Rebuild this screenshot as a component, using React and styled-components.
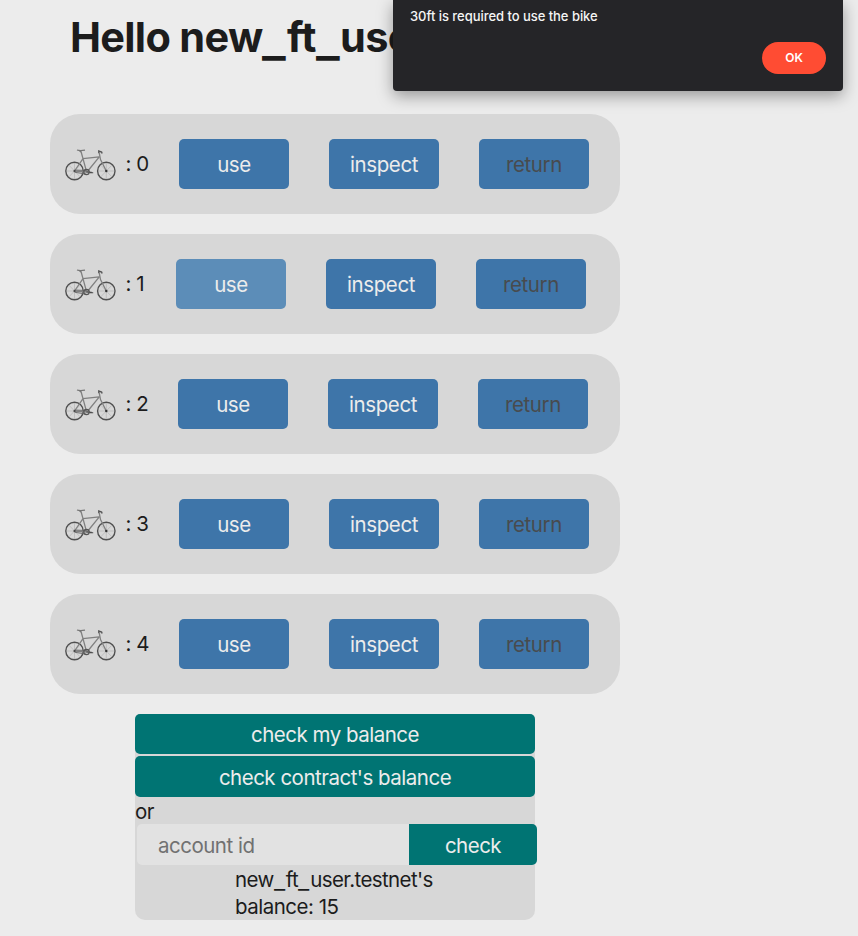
import React from "react";
import styled, { createGlobalStyle } from "styled-components";

const GlobalStyle = createGlobalStyle`
  * { box-sizing: border-box; }
  body {
    margin: 0;
    background: #ececec;
    color: #1c1c1c;
    font-family: Inter, "Liberation Sans", sans-serif;
    font-size: 20.5px;
    letter-spacing: -0.5px;
    font-feature-settings: "calt" 0;
    overflow: hidden;
  }
`;

const Page = styled.main`
  width: 858px;
  height: 936px;
  padding-left: 50px;
  overflow: hidden;
`;

const Title = styled.h1`
  margin: 0;
  height: 114px;
  padding: 11px 0 0 20px;
  font-size: 41.5px;
  line-height: 52px;
  font-weight: 700;
  letter-spacing: -0.7px;
  white-space: nowrap;
`;

const Underscore = styled.span`
  display: inline-block;
  width: 0.59em;
  letter-spacing: 0;
  transform: translateY(0.09em) scaleX(1.2);
  transform-origin: left;
`;

const BikeList = styled.div`
  display: flex;
  flex-direction: column;
  gap: 20px;
  width: 570px;
`;

const BikeRow = styled.section`
  display: flex;
  align-items: center;
  height: 100px;
  padding-left: 15px;
  border-radius: 30px;
  background: #d7d7d7;
`;

const BikeDrawing = styled.svg`
  flex: none;
  width: 52px;
  height: 34px;
  margin: 1px 8.5px 0 0;
`;

const BikeLabel = styled.span`
  flex: none;
  width: ${(p) => p.$width}px;
  line-height: 28px;
  white-space: nowrap;
`;

const Actions = styled.div`
  display: flex;
  gap: 40px;
`;

const Button = styled.button`
  border: none;
  padding: 0;
  color: #ececec;
  font: inherit;
  font-feature-settings: inherit;
  letter-spacing: inherit;
`;

const ActionButton = styled(Button)`
  width: 110px;
  height: 50px;
  padding-top: 1px;
  border-radius: 5px;
  background: ${(p) => (p.$active ? "#5c8db8" : "#3e75a9")};
  letter-spacing: -0.4px;
  &:disabled { color: #484b4e; }
`;

const BalancePanel = styled.section`
  display: flex;
  flex-direction: column;
  width: 400px;
  height: 206px;
  margin: 20px 0 0 85px;
  border-radius: 5px 5px 10px 10px;
  background: #d7d7d7;
`;

const BalanceButton = styled(Button)`
  flex: none;
  height: ${(p) => p.$height}px;
  margin-bottom: ${(p) => p.$gap}px;
  padding-top: ${(p) => p.$height - 39}px;
  border-radius: 5px;
  background: #007473;
`;

const OrText = styled.div`
  flex: none;
  height: 27px;
  line-height: 30px;
`;

const AccountForm = styled.div`
  display: flex;
  flex: none;
  width: 400px;
  height: 41px;
  margin-left: 2px;
`;

const AccountInput = styled.input`
  width: 272px;
  border: none;
  border-radius: 5px 0 0 5px;
  padding: 2px 0 0 21px;
  background: #e2e2e2;
  font: inherit;
  letter-spacing: inherit;
  &::placeholder { color: #717171; opacity: 1; }
`;

const CheckButton = styled(Button)`
  width: 128px;
  padding-top: 2px;
  border-radius: 0 5px 5px 0;
  background: #007473;
`;

const BalanceResult = styled.p`
  flex: none;
  width: 202px;
  margin: 1px 0 0 100px;
  line-height: 27px;
`;

const AccountName = styled.span`
  letter-spacing: -0.6px;
`;

const Dialog = styled.div`
  position: absolute;
  top: 0;
  left: 393px;
  display: flex;
  flex-direction: column;
  width: 450px;
  height: 91px;
  padding: 7px 17px 0;
  border-radius: 0 0 4px 4px;
  background: #252528;
  box-shadow: 0 5px 16px rgba(0, 0, 0, 0.36);
  color: #f5f5f5;
  font-size: 13px;
  font-weight: 500;
  letter-spacing: -0.04px;
`;

const DialogMessage = styled.div`
  height: 35px;
  line-height: 19px;
`;

const OkButton = styled(Button)`
  align-self: flex-end;
  width: 64px;
  height: 32px;
  padding-bottom: 1px;
  border-radius: 16px;
  background: #ff4c33;
  color: #fff;
  font-size: 12px;
  font-weight: 600;
`;

function Bike() {
  return (
    <BikeDrawing viewBox="0 0 52 34" fill="none" aria-label="bike">
      <g stroke="#505050" strokeWidth="1.4">
        <circle cx="9.5" cy="23" r="8.7" />
        <circle cx="41.3" cy="23" r="8.7" />
      </g>
      <g stroke="#a2a2a2" strokeWidth=".45">
        <path d="M9.5 15v16M1.5 23h16M4 17.2l11 11.6M15 17.2 4 28.8" />
        <path d="M41.3 15v16M33.3 23h16M35.8 17.2l11 11.6M46.8 17.2l-11 11.6" />
      </g>
      <g stroke="#808080" strokeWidth="1.3" strokeLinejoin="round">
        <path d="m9.5 23 8.5-12.3L34.3 8.8 22 24zM16 3.5 18 10.7l3.5 13" />
        <path d="m34.3 5.2 1.2 6.3 5.8 11.5" />
      </g>
      <path d="m9.5 22 12 .5M9.5 24.2l12 2" stroke="#666" strokeWidth=".9" />
      <circle cx="21.5" cy="24" r="2.7" stroke="#555" strokeWidth="1.2" />
      <path d="m21.5 24 5.2.2M25 24.8h3.2" stroke="#444" strokeWidth="1.1" />
      <path d="M12 2c2 .7 5.5.5 8 .2M14.3 2.7l2 1.3" stroke="#777" strokeWidth="1.2" />
      <path d="M33.8 5.3V3l2.8 1 .5 1.4" stroke="#555" strokeWidth="1.4" />
      <circle cx="9.5" cy="23" r="1.1" fill="#444" />
      <circle cx="41.3" cy="23" r="1.2" fill="#333" />
    </BikeDrawing>
  );
}

const bikes = [
  { id: 0, labelWidth: 53.5 },
  { id: 1, labelWidth: 50.5, active: true },
  { id: 2, labelWidth: 52.5 },
  { id: 3, labelWidth: 53.5 },
  { id: 4, labelWidth: 53.5 },
];

function UserName() {
  return (
    <>
      new<Underscore>_</Underscore>ft<Underscore>_</Underscore>user
    </>
  );
}

export default function App() {
  return (
    <Page>
      <GlobalStyle />
      <Title>Hello <UserName /></Title>
      <BikeList>
        {bikes.map((bike) => (
          <BikeRow key={bike.id}>
            <Bike />
            <BikeLabel $width={bike.labelWidth}>: {bike.id}</BikeLabel>
            <Actions>
              <ActionButton $active={bike.active}>use</ActionButton>
              <ActionButton>inspect</ActionButton>
              <ActionButton disabled>return</ActionButton>
            </Actions>
          </BikeRow>
        ))}
      </BikeList>
      <BalancePanel>
        <BalanceButton $height={40} $gap={2}>check my balance</BalanceButton>
        <BalanceButton $height={41} $gap={0}>check contract's balance</BalanceButton>
        <OrText>or</OrText>
        <AccountForm>
          <AccountInput placeholder="account id" />
          <CheckButton>check</CheckButton>
        </AccountForm>
        <BalanceResult>
          <AccountName><UserName />.testnet's</AccountName><br />
          balance: 15
        </BalanceResult>
      </BalancePanel>
      <Dialog role="alertdialog">
        <DialogMessage>30ft is required to use the bike</DialogMessage>
        <OkButton>OK</OkButton>
      </Dialog>
    </Page>
  );
}
